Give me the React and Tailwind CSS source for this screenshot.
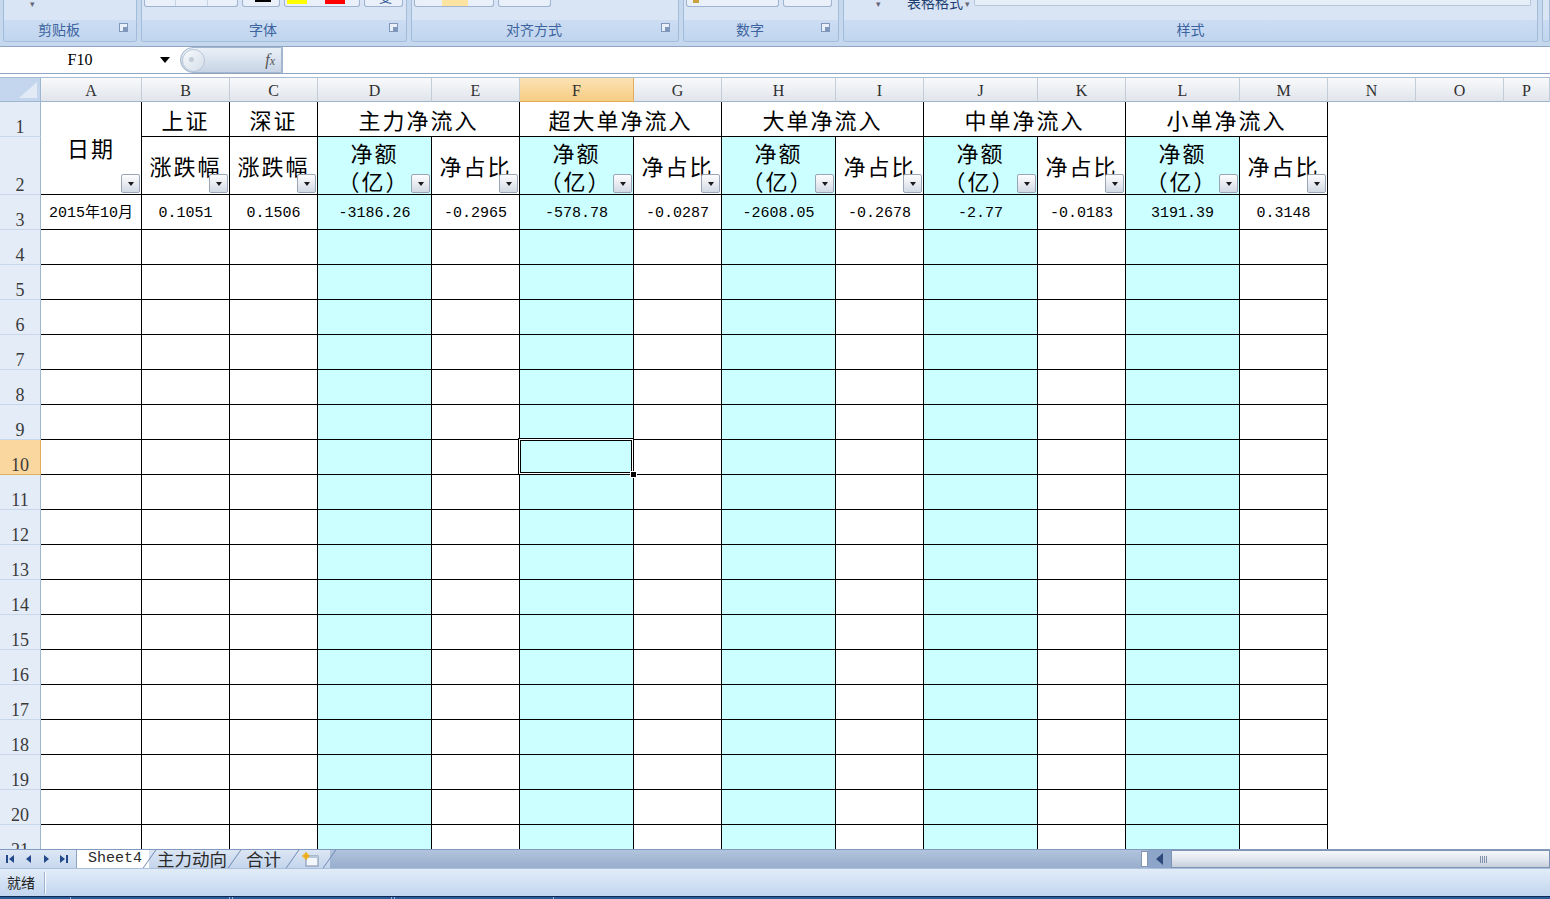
import React from 'react'

const COLS = ['A', 'B', 'C', 'D', 'E', 'F', 'G', 'H', 'I', 'J', 'K', 'L', 'M', 'N', 'O', 'P']
const TABLE = ['A', 'B', 'C', 'D', 'E', 'F', 'G', 'H', 'I', 'J', 'K', 'L', 'M']
const CYAN = ['D', 'F', 'H', 'J', 'L']

const row3 = {
  A: '2015年10月', B: '0.1051', C: '0.1506', D: '-3186.26', E: '-0.2965', F: '-578.78', G: '-0.0287',
  H: '-2608.05', I: '-0.2678', J: '-2.77', K: '-0.0183', L: '3191.39', M: '0.3148',
}

const groups = [
  { label: '主力净流入', col: 'D' },
  { label: '超大单净流入', col: 'F' },
  { label: '大单净流入', col: 'H' },
  { label: '中单净流入', col: 'J' },
  { label: '小单净流入', col: 'L' },
]

const cjk = { fontFamily: '"Noto Sans CJK SC", sans-serif' }
const serif = { fontFamily: '"Liberation Serif", "Noto Sans CJK SC", serif' }
const mono = { fontFamily: '"Liberation Mono", "Noto Sans CJK SC", monospace' }

function FilterBtn() {
  return (
    <div className="absolute right-[1px] bottom-[1px] z-10 flex h-[19px] w-[19px] items-center justify-center rounded-[2px] border border-[#9AA6B8] bg-linear-to-b from-[#FDFDFE] to-[#D3DAE4]">
      <div className="h-0 w-0 border-x-[3px] border-t-[4px] border-x-transparent border-t-[#1a1a1a]" />
    </div>
  )
}

function Box({ ml, w, children }) {
  return (
    <div className={`relative h-[7px] rounded-b-[3px] border border-t-0 border-[#9DB3CF] bg-[#E9F0F9] ${ml} ${w}`}>
      {children}
    </div>
  )
}

function Group({ w, label, launcher, children }) {
  return (
    <div className={`flex h-[42px] flex-col overflow-hidden rounded-b-[3px] border border-t-0 border-[#A3BCDA] ${w}`}>
      <div className="relative flex h-[20px] items-start bg-[#D9E5F4]">{children}</div>
      <div className={`relative flex flex-1 items-center justify-center bg-linear-to-b from-[#CCDDF2] to-[#C0D5EE] text-[14px] text-[#3D64A0] ${launcher ? 'pr-[22px]' : ''}`} style={cjk}>
        <span className="-mt-[2px]">{label}</span>
        {launcher && (
          <div className="absolute right-[8px] top-[3px] h-[9px] w-[9px] border border-[#7E97BA] bg-[#E8EFF8]">
            <div className="absolute right-0 bottom-0 h-[4px] w-[4px] bg-[#7E97BA]" />
          </div>
        )}
      </div>
    </div>
  )
}

function Ribbon() {
  return (
    <div className="flex h-[46px] gap-[4px] bg-[#C6D8EE] pl-[3px]">
      <Group w="w-[134px]" label="剪贴板" launcher>
        <span className="ml-[26px] -mt-[3px] text-[9px] text-[#667]">▾</span>
      </Group>
      <Group w="w-[266px]" label="字体" launcher>
        <Box ml="ml-[2px]" w="w-[94px]">
          <div className="absolute left-[30px] top-0 h-[6px] w-px bg-[#C6D3E3]" />
          <div className="absolute left-[62px] top-0 h-[6px] w-px bg-[#C6D3E3]" />
        </Box>
        <Box ml="ml-[4px]" w="w-[38px]">
          <div className="absolute left-[12px] top-0 h-[2px] w-[16px] bg-black" />
        </Box>
        <Box ml="ml-[4px]" w="w-[76px]">
          <div className="absolute left-[2px] top-0 h-[4px] w-[20px] bg-[#FFFF00]" />
          <div className="absolute left-[40px] top-0 h-[4px] w-[20px] bg-[#FF0000]" />
        </Box>
        <Box ml="ml-[4px]" w="w-[39px]">
          <div className="absolute left-[14px] -top-[10px] text-[13px] leading-none text-[#2B4E8C]" style={cjk}>变</div>
        </Box>
      </Group>
      <Group w="w-[268px]" label="对齐方式" launcher>
        <Box ml="ml-[2px]" w="w-[80px]">
          <div className="absolute left-[27px] top-0 h-[6px] w-[26px] bg-[#FCE3A2]" />
        </Box>
        <Box ml="ml-[4px]" w="w-[53px]" />
      </Group>
      <Group w="w-[156px]" label="数字" launcher>
        <Box ml="ml-[2px]" w="w-[93px]">
          <div className="absolute left-[6px] top-0 h-[3px] w-[6px] bg-[#C8A23C]" />
        </Box>
        <Box ml="ml-[4px]" w="w-[49px]" />
      </Group>
      <Group w="w-[695px]" label="样式">
        <span className="ml-[32px] -mt-[3px] text-[9px] text-[#667]">▾</span>
        <span className="ml-[26px] -mt-[6px] text-[14px] leading-[16px] text-[#1F3F73]" style={cjk}>表格格式</span>
        <span className="ml-[2px] -mt-[3px] text-[9px] text-[#667]">▾</span>
        <div className="ml-[4px] mr-[6px] h-[6px] flex-1 rounded-b-[2px] border border-t-0 border-[#B4C6DC] bg-[#E6EEF8]" />
      </Group>
      <Group w="flex-1" label="" />
    </div>
  )
}

function FormulaBar() {
  return (
    <>
      <div className="flex h-[28px] border-y border-[#8FA5C3] bg-white">
        <div className="flex w-[180px] items-center">
          <span className="w-[160px] text-center text-[16px] text-black" style={serif}>F10</span>
          <div className="h-0 w-0 border-x-[5px] border-t-[6px] border-x-transparent border-t-black" />
        </div>
        <div className="relative flex w-[102px] items-center justify-end rounded-l-full border border-[#A4B6CD] bg-linear-to-b from-[#EAF0F7] to-[#C7D4E5] pr-[6px]">
          <div className="absolute left-[1px] top-[1px] h-[23px] w-[23px] rounded-full border border-[#B7C5D8] bg-linear-to-br from-[#F8FAFC] to-[#D5DEEA]">
            <div className="absolute left-[6px] top-[7px] h-[5px] w-[5px] rounded-full bg-[#C2CCD8]" />
          </div>
          <span className="text-[16px] italic text-[#555]" style={serif}>
            f<span className="text-[12px]">x</span>
          </span>
        </div>
        <div className="flex-1 border-l border-[#A4B6CD]" />
      </div>
      <div className="h-[4px] border-b border-[#A9BBD0] bg-white" />
    </>
  )
}

function Corner() {
  return (
    <div className="relative border-r border-b border-[#9EB6CE] bg-[#C4D6EE]">
      <svg className="absolute right-[3px] bottom-[3px]" width="18" height="16" viewBox="0 0 18 16">
        <polygon points="18,0 18,16 0,16" fill="#E2EAF5" />
      </svg>
    </div>
  )
}

function ColHeader({ c }) {
  const sel = c === 'F'
  return (
    <div
      className={`flex items-center justify-center border-r border-b pt-[3px] text-[16px] text-[#2f2f2f] ${
        sel
          ? 'border-r-[#E3AE5C] border-b-[#E3AE5C] bg-linear-to-b from-[#FBE2B3] to-[#F6CD83]'
          : 'border-r-[#C3CCD8] border-b-[#9EB6CE] bg-linear-to-b from-[#F8F9FB] to-[#E1E5EB]'
      }`}
      style={serif}
    >
      {c}
    </div>
  )
}

function RowHeader({ n }) {
  const sel = n === 10
  return (
    <div
      className={`flex items-end justify-center overflow-hidden border-r border-b text-[18px] leading-[18px] text-[#3a3a3a] ${
        sel ? 'border-r-[#E3AE5C] border-b-[#E3AE5C] bg-[#F9D79F]' : 'border-r-[#9EB6CE] border-b-[#C9D7EA] bg-[#E4ECF7]'
      }`}
      style={serif}
    >
      <span className="-mb-[2px] pb-[2px]">{n}</span>
    </div>
  )
}

function Cell({ col, row, children, className = '', style }) {
  const inTable = TABLE.includes(col)
  const cyan = CYAN.includes(col) && row >= 2
  return (
    <div
      className={`relative ${inTable ? 'border-r border-b border-black' : ''} ${cyan ? 'bg-[#CCFFFF]' : 'bg-white'} ${className}`}
      style={style}
    >
      {children}
      {col === 'F' && row === 10 && (
        <div className="absolute -left-[2px] -top-[2px] z-20 h-[37px] w-[116px] border border-black">
          <div className="h-full w-full border border-white">
            <div className="h-full w-full border border-black" />
          </div>
          <div className="absolute -right-[4px] -bottom-[4px] h-[7px] w-[7px] border border-white bg-black" />
        </div>
      )}
    </div>
  )
}

function Sheet() {
  const cells = []
  cells.push(<Corner key="corner" />)
  COLS.forEach((c) => cells.push(<ColHeader key={'h' + c} c={c} />))

  // row 1
  cells.push(<RowHeader key="r1" n={1} />)
  cells.push(
    <Cell key="A1" col="A" row={1} className="row-span-2 flex items-center justify-center text-[22px] tracking-[2px]" style={cjk}>
      <span className="-mt-[2px]">日期</span>
      <FilterBtn />
    </Cell>
  )
  cells.push(
    <Cell key="B1" col="B" row={1} className="flex items-center justify-center text-[22px] tracking-[2px]" style={cjk}>
      上证
    </Cell>
  )
  cells.push(
    <Cell key="C1" col="C" row={1} className="flex items-center justify-center text-[22px] tracking-[2px]" style={cjk}>
      深证
    </Cell>
  )
  groups.forEach((g) =>
    cells.push(
      <Cell key={g.col + '1'} col={g.col} row={1} className="col-span-2 flex items-center justify-center bg-white text-[22px] tracking-[2px]" style={cjk}>
        {g.label}
      </Cell>
    )
  )
  ;['N', 'O', 'P'].forEach((c) => cells.push(<Cell key={c + '1'} col={c} row={1} />))

  // row 2
  cells.push(<RowHeader key="r2" n={2} />)
  COLS.slice(1).forEach((c) => {
    let content = null
    if (c === 'B' || c === 'C') content = '涨跌幅'
    else if (CYAN.includes(c)) content = (
      <span className="flex flex-col items-center leading-[28px]">
        <span>净额</span>
        <span className="-ml-[2px]">（亿）</span>
      </span>
    )
    else if (TABLE.includes(c)) content = '净占比'
    cells.push(
      <Cell key={c + '2'} col={c} row={2} className="flex items-center justify-center overflow-hidden whitespace-nowrap text-[22px] tracking-[2px]" style={cjk}>
        {content}
        {TABLE.includes(c) && <FilterBtn />}
      </Cell>
    )
  })

  // rows 3..21
  for (let r = 3; r <= 21; r++) {
    cells.push(<RowHeader key={'r' + r} n={r} />)
    COLS.forEach((c) =>
      cells.push(
        <Cell key={c + r} col={c} row={r} className="flex items-center justify-center pt-[5px] text-[15px]" style={mono}>
          {r === 3 ? row3[c] : null}
        </Cell>
      )
    )
  }

  return (
    <div className="h-[771px] overflow-hidden bg-white">
      <div className="grid grid-cols-[41px_101px_88px_88px_114px_88px_114px_88px_114px_88px_114px_88px_114px_88px_88px_88px_1fr] grid-rows-[24px_35px_58px_repeat(19,35px)]">
        {cells}
      </div>
    </div>
  )
}

function NavIcon({ d }) {
  return (
    <svg width="10" height="10" viewBox="0 0 10 10">
      <path d={d} fill="#23498A" />
    </svg>
  )
}

function Slant() {
  return <span className="h-full w-px -skew-x-[35deg] bg-[#6F89B2]" />
}

function TabBar() {
  return (
    <div className="flex h-[19px] border-t border-[#7F99BF] bg-[#A4B8D5]">
      <div className="flex w-[76px] items-center gap-[8px] bg-linear-to-b from-[#DDE7F5] to-[#C8D8EE] pl-[5px]">
        <NavIcon d="M1 1h2v8H1zM9 1v8L4 5z" />
        <NavIcon d="M8 1v8L3 5z" />
        <NavIcon d="M3 1v8l5-4z" />
        <NavIcon d="M1 1v8l5-4zM7 1h2v8H7z" />
      </div>
      <div className="relative flex items-center border-l border-[#8DA3C4] bg-white pl-[11px] pr-[7px] text-[15px] text-[#2a2a2a]" style={mono}>
        Sheet4
      </div>
      <div className="flex items-center bg-linear-to-b from-[#DCE6F4] to-[#C4D5EC] text-[17.5px] text-[#2a2a2a]" style={cjk}>
        <Slant />
        <span className="px-[7px] leading-none">主力动向</span>
        <Slant />
        <span className="px-[11px] leading-none">合计</span>
        <Slant />
        <span className="flex items-center px-[9px]">
          <svg width="18" height="15" viewBox="0 0 18 15">
            <rect x="4" y="4" width="12" height="10" fill="#F3F6FA" stroke="#7D8FA8" />
            <rect x="4" y="4" width="12" height="2" fill="#B8C8DC" />
            <circle cx="4" cy="4" r="3" fill="#F4C430" />
            <path d="M4 0v8M0 4h8" stroke="#E59A1C" strokeWidth="1" />
          </svg>
        </span>
        <Slant />
      </div>
      <div className="flex-1 bg-linear-to-b from-[#B2C4DD] to-[#98AECD]" />
      <div className="flex">
        <div className="my-[1px] w-[7px] border border-[#8397B5] bg-white" />
        <div className="flex w-[23px] items-center justify-center bg-[#8DA5C8]">
          <div className="h-0 w-0 border-y-[6px] border-r-[7px] border-y-transparent border-r-[#2D4A78]" />
        </div>
        <div className="relative flex w-[379px] items-center justify-end border border-[#7F93B2] bg-linear-to-b from-[#F4F6F9] via-[#E3E8EF] to-[#C6CFDB] pr-[62px]">
          <div className="flex gap-[1px]">
            <div className="h-[7px] w-px bg-[#8090A8]" />
            <div className="h-[7px] w-px bg-[#8090A8]" />
            <div className="h-[7px] w-px bg-[#8090A8]" />
            <div className="h-[7px] w-px bg-[#8090A8]" />
          </div>
        </div>
      </div>
    </div>
  )
}

function StatusBar() {
  return (
    <>
      <div className="flex h-[28px] items-center border-t border-[#A9BFDB] bg-linear-to-b from-[#E2ECF8] via-[#D2E1F4] to-[#C2D6EF]">
        <span className="w-[44px] pl-[7px] text-[14px] text-[#1E1E1E]" style={cjk}>
          就绪
        </span>
        <div className="h-[22px] w-px bg-[#9AB1CF]" />
        <div className="h-[22px] w-px bg-white" />
      </div>
      <div className="flex h-[3px] border-t border-[#0E2B55] bg-[#2B5B98]">
        <div className="ml-[70px] w-[160px] border-x border-[#9DB7DA]" />
        <div className="ml-[2px] w-[160px] border-x border-[#9DB7DA]" />
        <div className="ml-[2px] w-[160px] border-x border-[#9DB7DA]" />
      </div>
    </>
  )
}

export default function App() {
  return (
    <div className="h-[899px] w-[1550px] overflow-hidden bg-white">
      <Ribbon />
      <FormulaBar />
      <Sheet />
      <TabBar />
      <StatusBar />
    </div>
  )
}
